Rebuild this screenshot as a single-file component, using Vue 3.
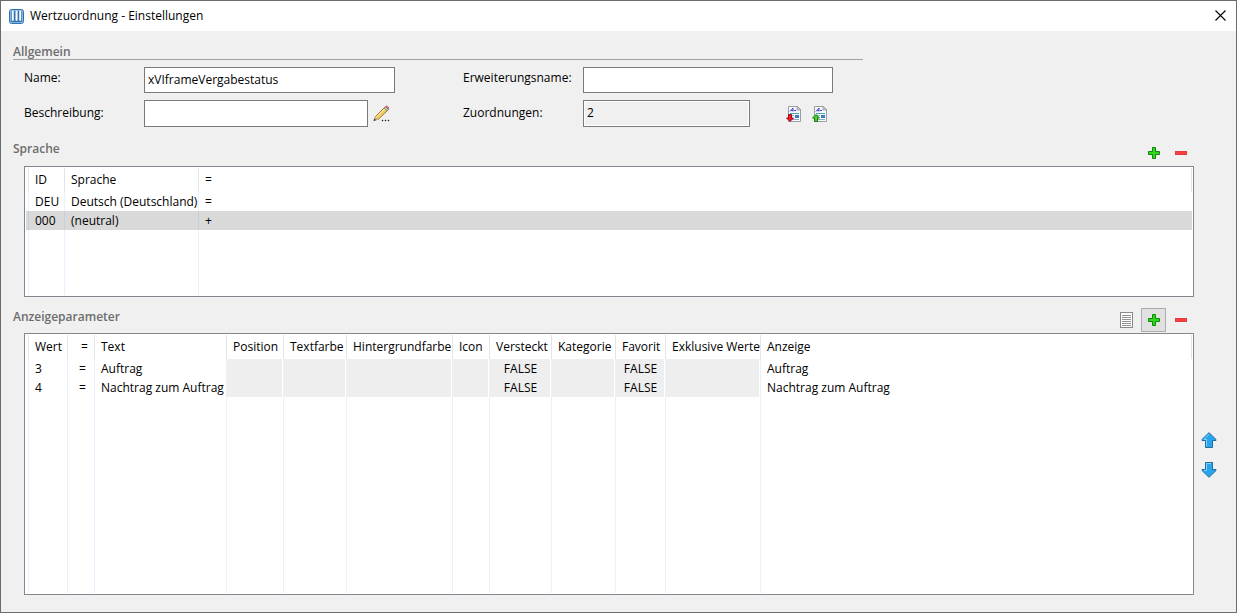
<script setup>
import { ref } from 'vue'

const name = ref('xVIframeVergabestatus')
const extensionName = ref('')
const description = ref('')
const assignments = ref('2')

const languages = [
  { id: 'DEU', label: 'Deutsch (Deutschland)', sign: '=' },
  { id: '000', label: '(neutral)', sign: '+', selected: true },
]

const columns = [
  { key: 'value', label: 'Wert' },
  { key: 'sign', label: '=' },
  { key: 'text', label: 'Text' },
  { key: 'position', label: 'Position', shaded: true },
  { key: 'textColor', label: 'Textfarbe', shaded: true },
  { key: 'background', label: 'Hintergrundfarbe', shaded: true },
  { key: 'icon', label: 'Icon', shaded: true },
  { key: 'hidden', label: 'Versteckt', shaded: true, center: true },
  { key: 'category', label: 'Kategorie', shaded: true },
  { key: 'favorite', label: 'Favorit', shaded: true, center: true },
  { key: 'exclusive', label: 'Exklusive Werte', shaded: true },
  { key: 'display', label: 'Anzeige' },
]

const parameters = [
  { value: '3', sign: '=', text: 'Auftrag', hidden: 'FALSE', favorite: 'FALSE', display: 'Auftrag' },
  { value: '4', sign: '=', text: 'Nachtrag zum Auftrag', hidden: 'FALSE', favorite: 'FALSE', display: 'Nachtrag zum Auftrag' },
]
</script>

<template>
  <main class="dialog">
    <header class="titlebar">
      <svg class="logo" width="15" height="15" viewBox="0 0 15 15" aria-hidden="true">
        <rect x="0.5" y="0.5" width="14" height="14" rx="2" fill="#dcebf7" stroke="#2e75b6" />
        <rect x="1.500" y="1.500" width="12" height="12" rx="1" fill="#2e75b6" />
        <path d="M3 2h1.500v9.500h-1.500zM6.800 2h1.500v9.500h-1.500zM10.500 2h1.500v9.500h-1.500z" fill="#fff" stroke="#fff" stroke-width="0.500" />
      </svg>
      <h1>Wertzuordnung - Einstellungen</h1>
      <button class="close" type="button" aria-label="Schließen">
        <svg width="11" height="11" viewBox="0 0 11 11"><path d="M0.500 0.500l10 10M10.500 0.500l-10 10" stroke="#000" stroke-width="1.100" /></svg>
      </button>
    </header>

    <section class="general">
      <h2>Allgemein</h2>
      <div class="form">
        <label for="name">Name:</label>
        <input id="name" v-model="name" type="text" />
        <label class="second" for="ext">Erweiterungsname:</label>
        <input id="ext" v-model="extensionName" type="text" />

        <label for="desc">Beschreibung:</label>
        <div class="field">
          <input id="desc" v-model="description" type="text" />
          <button class="icon-button" type="button" aria-label="Beschreibung bearbeiten">
            <svg width="18" height="18" viewBox="0 0 18 18">
              <path d="M1 15.500l1.500-4L12 2l3 3-9.500 9z" fill="#f3cd62" stroke="#8d6a32" stroke-width="0.900" />
              <path d="M3.500 12L12.500 3" stroke="#fff0a8" stroke-width="1" />
              <path d="M11 3l1.500-1.500 3 3L14 6z" fill="#b8c4b8" stroke="#6d8072" stroke-width="0.700" />
              <path d="M12.500 1.500c1-1.300 4.500 1 3 3z" fill="#e06a78" stroke="#b8505c" stroke-width="0.600" />
              <path d="M1 15.500l1.500-4 2.500 2.700z" fill="#d9b98a" />
              <path d="M0.500 16l1-2.500L3 15z" fill="#333" />
              <path d="M9 15h1v1H9zM12 15h1v1h-1zM15 15h1v1h-1z" fill="#222" stroke="#222" stroke-width="0.400" />
            </svg>
          </button>
        </div>
        <label class="second" for="count">Zuordnungen:</label>
        <div class="field">
          <input id="count" v-model="assignments" class="count" type="text" readonly />
          <div class="transfer">
            <button v-for="dir in ['import', 'export']" :key="dir" class="icon-button" type="button" :aria-label="dir === 'import' ? 'Importieren' : 'Exportieren'">
              <svg width="16" height="16" viewBox="0 0 16 16">
                <path d="M2.500 0.500h9l3 3v12h-12z" fill="#f7fafc" stroke="#9a9fa3" />
                <path d="M11 0.500v3.500h4z" fill="#d5d9dc" stroke="#8f9498" stroke-width="0.800" />
                <path d="M4 5.500L7 2v3.500M5 4.500h2" fill="none" stroke="#4a45d6" stroke-width="1" />
                <path d="M8 4.500h2" stroke="#4a45d6" />
                <path d="M4 7.500h9" stroke="#49a7a4" />
                <path d="M4 9.500h4" stroke="#8eabc0" />
                <path d="M4 13.500h9" stroke="#8eabc0" />
                <rect x="9" y="9" width="4" height="3" fill="#3f7bc0" />
                <path v-if="dir === 'import'" d="M2.500 8.500h3V12h2L4 15.500.500 12h2z" fill="#f0202c" stroke="#a00a12" />
                <path v-else d="M2.500 15.500h3V12h2L4 8.500.500 12h2z" fill="#49cf2c" stroke="#178010" />
              </svg>
            </button>
          </div>
        </div>
      </div>
    </section>

    <section class="panel languages">
      <div class="panel-head">
        <h2>Sprache</h2>
        <div class="tools">
          <button class="tool" type="button" aria-label="Sprache hinzufügen">
            <svg width="12" height="12" viewBox="0 0 12 12"><path d="M4.500 0.500h3v4h4v3h-4v4h-3v-4h-4v-3h4z" fill="#35d420" stroke="#0b8a08" /></svg>
          </button>
          <button class="tool" type="button" aria-label="Sprache entfernen">
            <svg width="12" height="12" viewBox="0 0 12 12"><rect x="0.500" y="4.500" width="11" height="3" fill="#fa4040" stroke="#e53a3a" /></svg>
          </button>
        </div>
      </div>
      <div class="listbox">
        <table aria-label="Sprache">
          <colgroup><col class="w-edge" /><col class="w-id" /><col class="w-language" /><col /></colgroup>
          <thead>
            <tr><td></td><th scope="col">ID</th><th scope="col">Sprache</th><th scope="col">=</th></tr>
          </thead>
          <tbody>
            <tr v-for="row in languages" :key="row.id" :class="{ selected: row.selected }">
              <td></td><td>{{ row.id }}</td><td>{{ row.label }}</td><td>{{ row.sign }}</td>
            </tr>
            <tr class="rest" aria-hidden="true"><td v-for="n in 4" :key="n"></td></tr>
          </tbody>
        </table>
      </div>
    </section>

    <section class="panel parameters">
      <div class="panel-head">
        <h2>Anzeigeparameter</h2>
        <div class="tools">
          <button class="tool" type="button" aria-label="Liste anzeigen">
            <svg width="13" height="16" viewBox="0 0 13 16">
              <rect x="0.500" y="0.500" width="12" height="15" fill="#fff" stroke="#888" />
              <path d="M2 3.500h9M2 5.500h9M2 7.500h9M2 9.500h9M2 11.500h9M2 13.500h9" stroke="#929292" />
            </svg>
          </button>
          <button class="tool active" type="button" aria-label="Parameter hinzufügen">
            <svg width="12" height="12" viewBox="0 0 12 12"><path d="M4.500 0.500h3v4h4v3h-4v4h-3v-4h-4v-3h4z" fill="#35d420" stroke="#0b8a08" /></svg>
          </button>
          <button class="tool" type="button" aria-label="Parameter entfernen">
            <svg width="12" height="12" viewBox="0 0 12 12"><rect x="0.500" y="4.500" width="11" height="3" fill="#fa4040" stroke="#e53a3a" /></svg>
          </button>
        </div>
      </div>
      <div class="listbox">
        <table aria-label="Anzeigeparameter">
          <colgroup>
            <col class="w-edge" />
            <col v-for="c in columns" :key="c.key" :class="'w-' + c.key" />
          </colgroup>
          <thead>
            <tr><td></td><th v-for="c in columns" :key="c.key" scope="col" :class="{ sign: c.key === 'sign' }">{{ c.label }}</th></tr>
          </thead>
          <tbody>
            <tr v-for="row in parameters" :key="row.value">
              <td></td>
              <td v-for="c in columns" :key="c.key" :class="{ shaded: c.shaded, center: c.center, sign: c.key === 'sign' }">{{ row[c.key] }}</td>
            </tr>
            <tr class="rest" aria-hidden="true"><td v-for="n in columns.length + 1" :key="n"></td></tr>
          </tbody>
        </table>
      </div>
      <div class="order">
        <button class="icon-button" type="button" aria-label="Nach oben">
          <svg width="16" height="16" viewBox="0 0 16 16">
            <path d="M8 .700L15 7.500v1H11.500v7h-7v-7H1v-1z" fill="#27a5ee" stroke="#246b9f" />
            <path d="M8 2.200L3 7.500h2.500v7" fill="none" stroke="#7fd4ff" />
          </svg>
        </button>
        <button class="icon-button" type="button" aria-label="Nach unten">
          <svg width="16" height="16" viewBox="0 0 16 16">
            <path d="M8 15.300L15 8.500v-1H11.500v-7h-7v7H1v1z" fill="#27a5ee" stroke="#246b9f" />
            <path d="M10 1.500H5.500v7H3" fill="none" stroke="#7fd4ff" />
          </svg>
        </button>
      </div>
    </section>
  </main>
</template>

<style>
body {
  background: #f0f0f0;
}
</style>

<style scoped>
* {
  box-sizing: border-box;
}

.dialog {
  display: flex;
  flex-direction: column;
  min-height: 100vh;
  border: 1px solid #6b6b6b;
  background: #f0f0f0;
  color: #000;
  font: 12px/16px "Segoe UI", "Open Sans", "Noto Sans", sans-serif;
}

button,
input {
  font: inherit;
  color: inherit;
}

h1,
h2 {
  margin: 0;
  font-size: 12px;
  line-height: 16px;
}

h1 {
  font-weight: 400;
}

h2 {
  color: #6d6d6d;
  font-weight: 600;
}

svg {
  display: block;
}

.titlebar {
  display: flex;
  align-items: center;
  gap: 6px;
  height: 30px;
  padding: 0 8px;
  background: #fff;
}

.close {
  margin-left: auto;
  padding: 0 2px 2px;
  border: 0;
  background: none;
}

.general {
  padding: 13px 12px 0;
}

.general h2 {
  max-width: 850px;
  height: 16px;
  border-bottom: 1px solid #a0a0a0;
}

.form {
  display: grid;
  grid-template-columns: 120px 251px 68px 120px 250px;
  row-gap: 7px;
  padding: 7px 0 0 11px;
}

.form label {
  grid-column: 1;
  padding-top: 3px;
}

.form .second {
  grid-column: 4;
}

.form .field,
.form label:nth-of-type(n + 3) {
  align-self: center;
}

.form label:nth-of-type(n + 3) {
  padding-top: 0;
  padding-bottom: 2px;
}

.form input {
  width: 100%;
  height: 26px;
  padding: 0 3px 2px;
  border: 1px solid #7a7a7a;
  border-radius: 0;
  background: #fff;
}

.field {
  display: flex;
  align-items: center;
}

.form .field input {
  flex: 1;
  min-width: 0;
  height: 27px;
}

.icon-button {
  padding: 0;
  border: 0;
  background: none;
}

.field > .icon-button {
  margin: 0 4px 0 5px;
}

.form .count {
  background: #f0f0f0;
  box-shadow: inset 0 0 0 1px #fff;
}

.transfer {
  display: flex;
  gap: 10px;
  margin: 0 5px 0 36px;
}

.panel {
  display: grid;
  grid-template-columns: minmax(0, 1fr) 42px;
  grid-template-rows: auto 1fr;
  padding-left: 12px;
}

.languages {
  padding-top: 14px;
}

.parameters {
  flex: 1;
  padding-top: 11px;
  padding-bottom: 17px;
}

.panel-head {
  display: flex;
  align-items: flex-start;
  justify-content: space-between;
}

.parameters h2 {
  padding-top: 1px;
}

.tools {
  display: flex;
  gap: 2px;
  padding: 0 1px 1px 0;
}

.tool {
  display: flex;
  align-items: center;
  justify-content: center;
  width: 25px;
  height: 24px;
  padding: 0;
  border: 1px solid transparent;
  background: none;
}

.tool.active {
  border-color: #adadad;
  background: #e1e1e1;
}

.listbox {
  display: flex;
  grid-column: 1;
  margin-left: 11px;
  padding: 1px;
  border: 1px solid #828790;
  background: #fff;
}

.languages .listbox {
  min-height: 131px;
}

table {
  width: 100%;
  table-layout: fixed;
  border-collapse: separate;
  border-spacing: 0;
}

th,
td {
  height: 19px;
  padding: 0 0 0 6px;
  border-right: 1px solid #e8f1fd;
  font-weight: 400;
  line-height: 18px;
  text-align: left;
  white-space: nowrap;
}

tbody td:last-child {
  border-right-color: transparent;
}

td:first-child {
  padding: 0;
}

thead td,
thead th {
  height: 24px;
  border-right-color: #e5e5e5;
}

.rest td {
  height: auto;
}

.center {
  padding: 0;
  text-align: center;
}

.shaded {
  background: #eee;
  box-shadow: inset -1px 0 #fff;
}

.selected {
  background: #d9d9d9;
}

.selected td {
  border-right-color: #c5d0df;
}

.sign {
  padding-left: 11px;
}

th.sign {
  padding-left: 13px;
}

.w-edge { width: 3px; }
.w-id { width: 36px; }
.w-language { width: 134px; }
.w-value { width: 39px; }
.w-sign { width: 27px; }
.w-text { width: 132px; }
.w-position { width: 57px; }
.w-textColor { width: 63px; }
.w-background { width: 106px; }
.w-icon { width: 37px; }
.w-hidden { width: 62px; }
.w-category { width: 64px; }
.w-favorite { width: 50px; }
.w-exclusive { width: 95px; }

.order {
  display: flex;
  grid-column: 2;
  flex-direction: column;
  align-items: center;
  align-self: center;
  gap: 14px;
  padding: 0 13px 18px 0;
}
</style>
